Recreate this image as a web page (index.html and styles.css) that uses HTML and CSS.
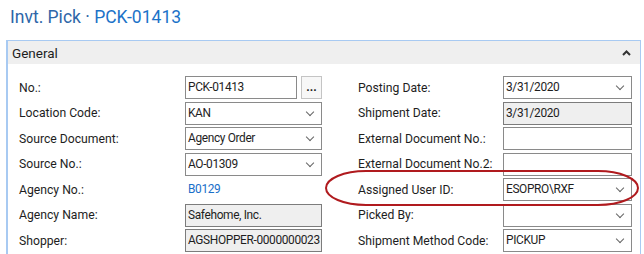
FILE: index.html
```html
<!DOCTYPE html>
<html lang="en">
<head>
    <meta charset="UTF-8">
    <title>Invt. Pick</title>
    <link rel="stylesheet" href="styles.css">
</head>
<body>

    <!-- Page title -->
    <div class="page-title">
        <span class="title-type">Invt. Pick ·</span> <span class="title-no">PCK-01413</span>
    </div>

    <!-- General FastTab -->
    <div class="fasttab">
        <div class="fasttab-head">
            <span>General</span>
            <svg class="collapse-icon" width="9" height="6" viewBox="0 0 9 6"><path d="M1 5 L4.5 1.5 L8 5" fill="none" stroke="#333" stroke-width="2"/></svg>
        </div>

        <div class="fasttab-body">
            <div class="col col-left">
                <div class="row">
                    <label>No.:</label>
                    <div class="field-group">
                        <div class="field short">PCK-01413</div>
                        <div class="assist-btn">...</div>
                    </div>
                </div>
                <div class="row">
                    <label>Location Code:</label>
                    <div class="field select">KAN</div>
                </div>
                <div class="row">
                    <label>Source Document:</label>
                    <div class="field select">Agency Order</div>
                </div>
                <div class="row">
                    <label>Source No.:</label>
                    <div class="field select">AO-01309</div>
                </div>
                <div class="row">
                    <label>Agency No.:</label>
                    <div class="field link">B0129</div>
                </div>
                <div class="row">
                    <label>Agency Name:</label>
                    <div class="field readonly">Safehome, Inc.</div>
                </div>
                <div class="row">
                    <label>Shopper:</label>
                    <div class="field readonly">AGSHOPPER-0000000023</div>
                </div>
                <div class="row">
                    <label></label>
                    <div class="field"></div>
                </div>
            </div>

            <div class="col col-right">
                <div class="row">
                    <label>Posting Date:</label>
                    <div class="field select">3/31/2020</div>
                </div>
                <div class="row">
                    <label>Shipment Date:</label>
                    <div class="field readonly">3/31/2020</div>
                </div>
                <div class="row">
                    <label>External Document No.:</label>
                    <div class="field"></div>
                </div>
                <div class="row">
                    <label>External Document No.2:</label>
                    <div class="field"></div>
                </div>
                <div class="row">
                    <label>Assigned User ID:</label>
                    <div class="field select">ESOPRO\RXF</div>
                </div>
                <div class="row">
                    <label>Picked By:</label>
                    <div class="field select"></div>
                </div>
                <div class="row">
                    <label>Shipment Method Code:</label>
                    <div class="field select">PICKUP</div>
                </div>
                <div class="row">
                    <label></label>
                    <div class="field"></div>
                </div>
            </div>
        </div>

        <!-- highlight drawn over the form -->
        <svg class="highlight" width="314" height="36" viewBox="0 0 314 36">
            <rect x="1" y="1" width="312" height="34" rx="40" ry="17" fill="none" stroke="#b01a1e" stroke-width="2"/>
        </svg>
    </div>

</body>
</html>
```

FILE: styles.css
```css
body {
    margin: 0;
    font-family: 'Roboto', 'Noto Sans', sans-serif;
    font-size: 12.2px;
    color: #1e1e1e;
    background-color: #fff;
    height: 254px;
    overflow: hidden;
}

/* Title */
.page-title {
    height: 40px;
    padding-left: 10px;
    font-size: 17.5px;
    line-height: 35px;
}

.title-type {
    color: #2e66a8;
}

.title-no {
    color: #1c72c8;
}

/* FastTab */
.fasttab {
    position: relative;
    margin: 0 3px 0 6px;
    border: 1px solid #a8caf2;
    border-left-width: 2px;
    border-bottom: none;
}

.fasttab-head {
    height: 23px;
    background-color: #efefef;
    display: flex;
    align-items: center;
    justify-content: space-between;
    padding: 0 9px 0 4px;
    font-size: 13.5px;
}

.fasttab-body {
    display: flex;
    padding-top: 11px;
}

.col {
    display: flex;
    flex-direction: column;
}

.col-left {
    padding-left: 11px;
    width: 303px;
}

.col-right {
    padding-left: 36px;
}

.row {
    display: flex;
    align-items: center;
    height: 25.5px;
}

.col-left label {
    width: 166px;
    flex-shrink: 0;
}

.col-right label {
    width: 145px;
    flex-shrink: 0;
    white-space: nowrap;
}

/* Fields */
.field {
    box-sizing: border-box;
    height: 23px;
    border: 1px solid #8a8a8a;
    padding: 0 2px;
    line-height: 21px;
    font-size: 11.9px;
    letter-spacing: -0.35px;
    white-space: nowrap;
    overflow: hidden;
    position: relative;
}

.col-left .field {
    width: 137px;
}

.col-right .field {
    width: 129px;
}

.field-group {
    display: flex;
    gap: 4px;
}

.col-left .field.short {
    width: 112px;
}

.assist-btn {
    box-sizing: border-box;
    width: 21px;
    height: 23px;
    border: 1px solid #c4c4c4;
    background-color: #f7f7f7;
    font-weight: bold;
    font-size: 12px;
    line-height: 20px;
    text-align: center;
}

.field.select::after {
    content: '';
    position: absolute;
    right: 8px;
    top: 6px;
    width: 5px;
    height: 5px;
    border-right: 1px solid #666;
    border-bottom: 1px solid #666;
    transform: rotate(45deg);
}

.field.readonly {
    background-color: #efefef;
    border-color: #7c7c7c;
}

.field.link {
    border-color: transparent;
    color: #1a6fc9;
}

/* Red highlight around Assigned User ID */
.highlight {
    position: absolute;
    left: 317px;
    top: 129px;
}
```
